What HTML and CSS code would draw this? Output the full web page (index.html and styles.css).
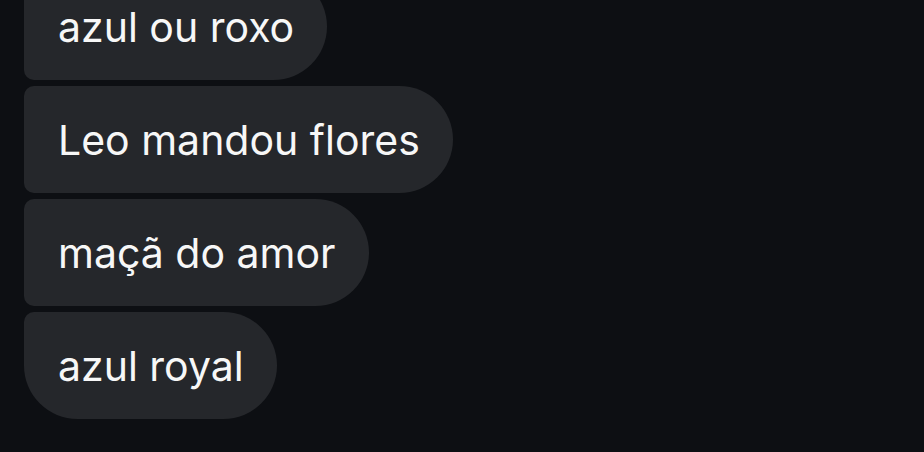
FILE: index.html
```html
<html>
    <head>
        <link rel="stylesheet" href="styles.css">
    </head>
    <body>
        <div id="conversa">
            <div class="balao primeiro">azul ou roxo</div>
            <div class="balao">Leo mandou flores</div>
            <div class="balao">maçã do amor</div>
            <div class="balao ultimo">azul royal</div>
        </div>
    </body>
</html>
```
FILE: styles.css
```css
html {
    height: 100%;
}
body {
    margin: 0;
    height: 100%;
    background-color: #0d0f13;
    overflow: hidden;
}
#conversa {
    display: flex;
    flex-direction: column;
    align-items: flex-start;
    gap: 6px;
    padding-left: 24px;
    margin-top: -27px;
}
.balao {
    box-sizing: border-box;
    height: 107px;
    display: flex;
    align-items: center;
    padding: 0 33px 0 34px;
    background-color: #25272b;
    color: #f7f7f7;
    font-family: Inter, "Noto Sans", sans-serif;
    font-size: 41px;
    border-radius: 10px 54px 54px 10px;
}
.ultimo {
    border-bottom-left-radius: 54px;
}
```
